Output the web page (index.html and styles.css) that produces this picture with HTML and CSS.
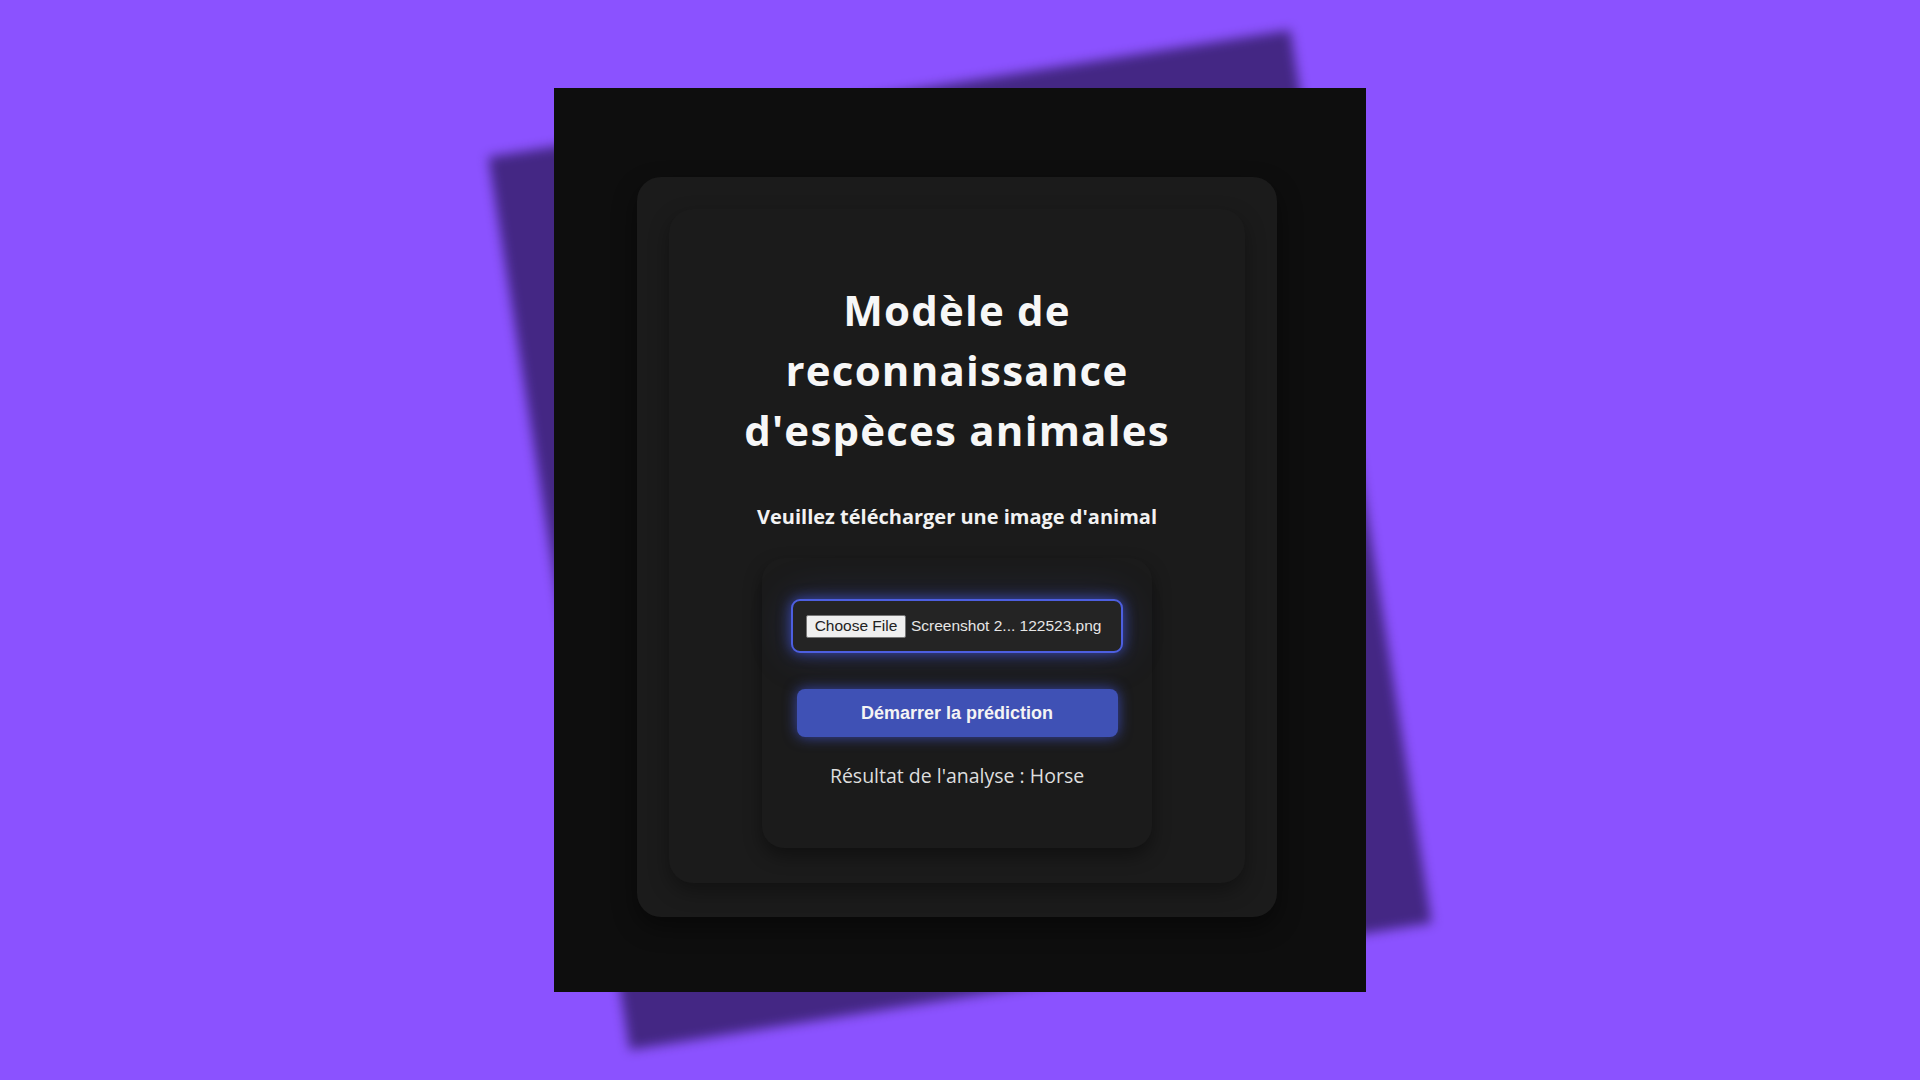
FILE: index.html
```html
<!DOCTYPE html>
<html lang="fr">
<head>
<meta charset="utf-8">
<title>Reconnaissance d'espèces animales</title>
<link rel="stylesheet" href="styles.css">
</head>
<body>
<div class="stage">
  <div class="frame">
    <div class="card-outer">
      <div class="card-inner">
        <h1 class="title">Modèle de reconnaissance d'espèces animales</h1>
        <p class="subtitle">Veuillez télécharger une image d'animal</p>
        <div class="form-card">
          <div class="file-box">
            <span class="file-btn">Choose File</span>
            <span class="file-name">Screenshot 2... 122523.png</span>
          </div>
          <button class="predict-btn" type="button">Démarrer la prédiction</button>
          <p class="result">Résultat de l'analyse : Horse</p>
        </div>
      </div>
    </div>
  </div>
</div>
</body>
</html>
```
FILE: styles.css
```css
html, body {
  margin: 0;
  padding: 0;
}
body {
  background: #8b52ff;
  height: 1080px;
  overflow: hidden;
  font-family: "Open Sans", "Noto Sans", sans-serif;
}
.stage {
  height: 1080px;
  display: flex;
  align-items: center;
  justify-content: center;
}
.frame {
  position: relative;
  width: 812px;
  height: 904px;
  background: #0e0e0e;
  display: flex;
  justify-content: center;
  padding-top: 89px;
  padding-right: 6px;
  box-sizing: border-box;
}
.frame::before {
  content: "";
  position: absolute;
  inset: 0;
  background: rgba(20, 10, 50, 0.6);
  transform: rotate(-9deg);
  filter: blur(6px);
  z-index: -1;
}
.card-outer {
  width: 640px;
  height: 740px;
  box-sizing: border-box;
  padding: 32px;
  background: #1b1b1b;
  border-radius: 24px;
  box-shadow: 0 10px 24px rgba(0, 0, 0, 0.45);
}
.card-inner {
  height: 674px;
  box-sizing: border-box;
  background: #1b1b1b;
  border-radius: 24px;
  box-shadow: 0 8px 20px rgba(0, 0, 0, 0.35);
  padding-top: 71px;
  display: flex;
  flex-direction: column;
  align-items: center;
}
.title {
  margin: 0;
  width: 480px;
  text-align: center;
  color: #f7f7f7;
  font-size: 42px;
  line-height: 60px;
  letter-spacing: 1.2px;
  font-weight: 700;
}
.subtitle {
  margin: 43px 0 0;
  color: #f2f2f2;
  font-size: 20px;
  line-height: 28px;
  font-weight: 700;
}
.form-card {
  margin-top: 27px;
  width: 390px;
  height: 290px;
  box-sizing: border-box;
  padding-top: 41px;
  background: #1b1b1b;
  border-radius: 22px;
  box-shadow: 0 8px 18px rgba(0, 0, 0, 0.4);
  display: flex;
  flex-direction: column;
  align-items: center;
}
.file-box {
  width: 332px;
  height: 54px;
  box-sizing: border-box;
  border: 2px solid #4d5fe0;
  border-radius: 9px;
  background: #242424;
  box-shadow: 0 0 14px rgba(70, 90, 230, 0.75), 0 0 40px rgba(63, 81, 181, 0.25);
  display: flex;
  align-items: center;
  padding-left: 13px;
  font-family: "Liberation Sans", Arial, sans-serif;
  font-size: 15.5px;
}
.file-btn {
  display: inline-flex;
  align-items: center;
  justify-content: center;
  width: 100px;
  height: 23px;
  box-sizing: border-box;
  background: #efefef;
  border: 1px solid #767676;
  border-radius: 2px;
  color: #222;
}
.file-name {
  margin-left: 5px;
  color: #e6e6e6;
}
.predict-btn {
  margin-top: 36px;
  width: 321px;
  height: 48px;
  border: none;
  border-radius: 8px;
  background: #3f51b5;
  color: #f4f4f4;
  font-family: "Liberation Sans", Arial, sans-serif;
  font-size: 18px;
  font-weight: 700;
  box-shadow: 0 0 14px rgba(70, 90, 230, 0.7);
}
.result {
  margin: 25px 0 0;
  color: #dedede;
  font-size: 19.5px;
  line-height: 28px;
}
```
